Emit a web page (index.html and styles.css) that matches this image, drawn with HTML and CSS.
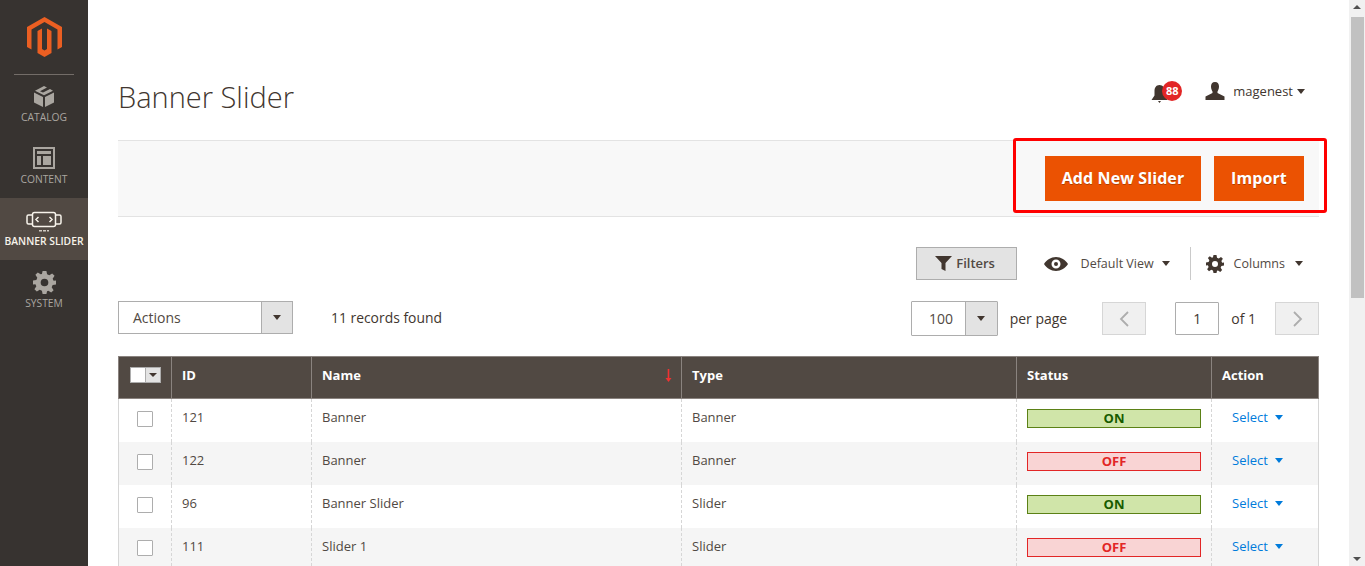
FILE: index.html
```html
<!DOCTYPE html>
<html lang="en">
<head>
<meta charset="utf-8">
<title>Banner Slider</title>
<link rel="stylesheet" href="styles.css">
</head>
<body>
<div class="app">
  <aside class="sidebar">
    <div class="logo">
      <svg width="35" height="40" viewBox="0 0 35 40"><path fill="#eb5f22" d="M17.5 0L35 10V30L30.5 32.6V12.6L17.5 5 4.5 12.6V32.6L0 30V10Z"/><path fill="#eb5f22" d="M10.5 14L15 11.5V32L17.5 33.5 20 32V11.5L24.5 14V36L17.5 40 10.5 36Z"/></svg>
    </div>
    <nav class="nav">
      <a class="nav-item">
        <svg class="nav-icon" width="20" height="21" viewBox="0 0 20 21"><path fill="#aaa6a0" d="M0 6.5L9 11V21L0 16.5ZM20 6.5V16.5L11 21V11ZM10 0L13 1.5 6 5.2 9 6.6 16 3 19 4.7 10 9.3 1 4.7Z"/></svg>
        <span>CATALOG</span>
      </a>
      <a class="nav-item">
        <svg class="nav-icon" width="22" height="22" viewBox="0 0 22 22"><path fill="#aaa6a0" fill-rule="evenodd" d="M0 0H22V22H0ZM2 2V20H20V2ZM4 4H18V7H4ZM4 9H8V18H4ZM10 9H18V18H10Z"/></svg>
        <span>CONTENT</span>
      </a>
      <a class="nav-item active">
        <svg class="nav-icon" width="36" height="22" viewBox="0 0 36 22"><g fill="none" stroke="#f7f3eb" stroke-width="1.5"><rect x="6.5" y="1.5" width="23" height="14" rx="2"/><path d="M6 4H2.5Q1 4 1 5.500V11.500Q1 13 2.500 13H6M30 4H33.500Q35 4 35 5.500V11.500Q35 13 33.500 13H30M12.500 6L10 8.500 12.500 11M23.500 6L26 8.500 23.500 11"/></g><path fill="#cfcac3" d="M13 19H16V20.500H13ZM17 19H20V20.500H17ZM21 19H23V20.500H21Z"/></svg>
        <span>BANNER SLIDER</span>
      </a>
      <a class="nav-item">
        <svg class="nav-icon" width="23" height="23" viewBox="0 0 24 24"><path fill="#aaa6a0" fill-rule="evenodd" d="M10 0H14L14.700 3.500 17 4.500 20 2.500 22.500 5 20.500 8 21.500 10.300 24 10V14L20.500 14.700 19.500 17 21.500 20 19 22.500 16 20.500 14.700 21 14 24H10L9.300 20.500 7 19.500 4 21.500 1.500 19 3.500 16 2.500 13.700 0 14V10L3.500 9.300 4.500 7 2.500 4 5 1.500 8 3.500 9.300 3ZM12 8A4 4 0 1 0 12 16 4 4 0 1 0 12 8Z"/></svg>
        <span>SYSTEM</span>
      </a>
    </nav>
  </aside>

  <main class="main">
    <header class="page-head">
      <h1 class="title">Banner Slider</h1>
      <div class="head-tools">
        <div class="bell">
          <svg width="17" height="18" viewBox="0 0 17 18"><path fill="#41362f" d="M8.500 0C12 0 13.500 3 13.500 6V10.500L16.500 15H.5L3.500 10.500V6C3.500 3 5 0 8.500 0ZM7 16H10L8.500 18Z"/></svg>
          <span class="badge">88</span>
        </div>
        <div class="user">
          <svg width="20" height="18" viewBox="0 0 20 18"><path fill="#41362f" d="M10 0C12.800 0 14 2 14 4.500S13 8.500 12.500 9.500V11L19.500 14.500V18H.5V14.500L7.500 11V9.500C7 8.500 6 7 6 4.500S7.200 0 10 0Z"/></svg>
          <span class="user-name">magenest</span>
          <i class="caret"></i>
        </div>
      </div>
    </header>

    <section class="actions-band">
      <button class="btn-primary btn-add">Add New Slider</button>
      <button class="btn-primary btn-import">Import</button>
      <div class="highlight"></div>
    </section>

    <section class="grid-tools">
      <button class="btn-filters">
        <svg width="17" height="15" viewBox="0 0 17 15"><path fill="#41362f" d="M0 0H17L10.500 7V15L6.500 13V7Z"/></svg>
        <span class="filters-label">Filters</span>
      </button>
      <div class="view-switch">
        <svg width="24" height="14" viewBox="0 0 24 14"><path fill="#41362f" fill-rule="evenodd" d="M12 0C17 0 21.500 3 24 7 21.500 11 17 14 12 14S2.500 11 0 7C2.500 3 7 0 12 0ZM12 2.500A4.500 4.500 0 1 0 12 11.500 4.500 4.500 0 1 0 12 2.500ZM12 5A2 2 0 1 1 12 9 2 2 0 1 1 12 5Z"/></svg>
        <span class="view-label">Default View</span>
        <i class="caret"></i>
      </div>
      <div class="columns-switch">
        <svg width="18" height="18" viewBox="0 0 24 24"><path fill="#41362f" fill-rule="evenodd" d="M10 0H14L14.700 3.500 17 4.500 20 2.500 22.500 5 20.500 8 21.500 10.300 24 10V14L20.500 14.700 19.500 17 21.500 20 19 22.500 16 20.500 14.700 21 14 24H10L9.300 20.500 7 19.500 4 21.500 1.500 19 3.500 16 2.500 13.700 0 14V10L3.500 9.300 4.500 7 2.500 4 5 1.500 8 3.500 9.300 3ZM12 8A4 4 0 1 0 12 16 4 4 0 1 0 12 8Z"/></svg>
        <span class="columns-label">Columns</span>
        <i class="caret"></i>
      </div>
    </section>

    <section class="pager-row">
      <div class="select select-actions">
        <span class="select-value">Actions</span>
        <span class="select-arrow"><i class="caret"></i></span>
      </div>
      <span class="records">11 records found</span>
      <div class="pager">
        <div class="select select-size">
          <span class="select-value">100</span>
          <span class="select-arrow"><i class="caret"></i></span>
        </div>
        <span class="per-page">per page</span>
        <span class="page-btn">
          <svg width="11" height="16" viewBox="0 0 11 16"><path fill="none" stroke="#adadad" stroke-width="1.800" d="M9 1L2 8 9 15"/></svg>
        </span>
        <span class="page-input">1</span>
        <span class="page-of">of 1</span>
        <span class="page-btn">
          <svg width="11" height="16" viewBox="0 0 11 16"><path fill="none" stroke="#adadad" stroke-width="1.800" d="M2 1L9 8 2 15"/></svg>
        </span>
      </div>
    </section>

    <table class="grid">
      <colgroup>
        <col class="c-check"><col class="c-id"><col class="c-name"><col class="c-type"><col class="c-status"><col class="c-action">
      </colgroup>
      <thead>
        <tr>
          <th><span class="mass"><span class="mass-box"></span><span class="mass-arrow"><i class="caret caret-small"></i></span></span></th>
          <th>ID</th>
          <th class="sorted">Name<svg class="sort-arrow" width="7" height="13" viewBox="0 0 7 13"><path fill="#f03232" d="M2.700 0H4.300V9H6.500L3.500 13 .5 9H2.700Z"/></svg></th>
          <th>Type</th>
          <th>Status</th>
          <th>Action</th>
        </tr>
      </thead>
      <tbody>
        <tr>
          <td class="cell-check"><span class="check"></span></td><td>121</td><td>Banner</td><td>Banner</td>
          <td><span class="status on">ON</span></td>
          <td class="cell-action"><a class="select-link">Select<i class="caret caret-blue"></i></a></td>
        </tr>
        <tr>
          <td class="cell-check"><span class="check"></span></td><td>122</td><td>Banner</td><td>Banner</td>
          <td><span class="status off">OFF</span></td>
          <td class="cell-action"><a class="select-link">Select<i class="caret caret-blue"></i></a></td>
        </tr>
        <tr>
          <td class="cell-check"><span class="check"></span></td><td>96</td><td>Banner Slider</td><td>Slider</td>
          <td><span class="status on">ON</span></td>
          <td class="cell-action"><a class="select-link">Select<i class="caret caret-blue"></i></a></td>
        </tr>
        <tr>
          <td class="cell-check"><span class="check"></span></td><td>111</td><td>Slider 1</td><td>Slider</td>
          <td><span class="status off">OFF</span></td>
          <td class="cell-action"><a class="select-link">Select<i class="caret caret-blue"></i></a></td>
        </tr>
      </tbody>
    </table>
  </main>

  <div class="scrollbar">
    <span class="sb-arrow sb-up"></span>
    <span class="sb-thumb"></span>
    <span class="sb-arrow sb-down"></span>
  </div>
</div>
</body>
</html>
```
FILE: styles.css
```css
* { box-sizing: border-box; }
html, body { margin: 0; height: 100%; overflow: hidden; }
body { font-family: "Open Sans", sans-serif; font-size: 14px; color: #41362f; background: #fff; }

.app { display: flex; height: 566px; overflow: hidden; }

/* Sidebar */
.sidebar { width: 88px; flex: none; background: #373330; }
.logo { height: 75px; margin: 0 14px; padding-top: 17px; display: flex; justify-content: center; border-bottom: 1px solid #736d68; }
.nav { display: flex; flex-direction: column; }
.nav-item { height: 62px; display: flex; flex-direction: column; align-items: center; color: #aaa6a0; font-size: 10.300px; line-height: 14px; white-space: nowrap; }
.nav-item:first-child { height: 61px; padding-top: 11px; }
.nav-item span { margin-top: auto; padding-bottom: 12px; }
.nav-item:nth-child(2) { padding-top: 11px; }
.nav-item:nth-child(3) { padding-top: 13px; }
.nav-item:nth-child(4) { padding-top: 11px; }
.nav-item.active { background: #514943; color: #f7f3eb; font-weight: 600; font-size: 10.300px; }

/* Main */
.main { flex: 1; min-width: 0; padding: 0 30px; position: relative; }
.page-head { height: 140px; display: flex; justify-content: space-between; padding-top: 78px; }
.title { margin: 0; font-size: 29px; font-weight: 300; line-height: 38px; color: #41362f; }
.head-tools { display: flex; align-items: flex-start; padding: 3px 14px 0 0; }
.bell { position: relative; width: 32px; height: 20px; margin: 2px 22px 0 0; padding-top: 2px; }
.badge { position: absolute; left: 11px; top: -2px; width: 20px; height: 20px; border-radius: 50%; background: #e22626; color: #fff; font-size: 11px; font-weight: 700; line-height: 20px; text-align: center; }
.user { display: flex; align-items: center; height: 20px; font-size: 13px; }
.user-name { margin: 0 4px 0 8px; }

.caret { display: inline-block; width: 0; height: 0; border-style: solid; border-width: 5px 4.500px 0; border-color: #41362f transparent transparent; }

/* Band */
.actions-band { height: 77px; margin-right: 0; padding: 15px 15px 0 0; display: flex; justify-content: flex-end; gap: 13px; background: #f8f8f8; border-top: 1px solid #e3e3e3; border-bottom: 1px solid #e3e3e3; position: relative; }
.btn-primary { height: 45px; border: 0; background: #eb5202; color: #fff; font: 700 16px/45px "Open Sans", sans-serif; letter-spacing: .1px; padding: 0; text-shadow: 0 1px 0 rgba(0,0,0,.25); }
.btn-add { width: 156px; }
.btn-import { width: 90px; }
.highlight { position: absolute; left: 895px; top: -3px; width: 314px; height: 75px; border: 3px solid #f00; border-radius: 3px; pointer-events: none; }

/* Grid tools */
.grid-tools { display: flex; justify-content: flex-end; align-items: center; height: 33px; margin-top: 30px; padding-right: 16px; }
.btn-filters { width: 101px; height: 33px; display: flex; align-items: center; justify-content: center; gap: 4px; background: #e3e3e3; border: 1px solid #adadad; color: #514943; font: 600 13px "Open Sans", sans-serif; padding: 0 2px 0 0; }
.filters-label { position: relative; top: -1px; }
.view-switch { display: flex; align-items: center; margin-left: 27px; width: 147px; height: 33px; border-right: 1px solid #cacaca; }
.view-label { font-size: 12.500px; margin: 0 8px 0 13px; color: #514943; }
.columns-switch { display: flex; align-items: center; height: 33px; margin-left: 15px; }
.columns-label { font-size: 12.500px; margin: 0 10px 0 10px; color: #514943; }

/* Pager row */
.pager-row { display: flex; align-items: flex-start; margin-top: 21px; height: 55px; }
.select { display: flex; height: 33px; border: 1px solid #adadad; background: #fff; }
.select-actions { width: 175px; }
.select-value { flex: 1; line-height: 31px; padding-left: 14px; color: #514943; }
.select-arrow { width: 32px; flex: none; display: flex; align-items: center; justify-content: center; background: #e3e3e3; border-left: 1px solid #adadad; }
.select-actions .select-arrow { width: 31px; }
.records { margin-left: 38px; line-height: 33px; font-size: 13.900px; }
.pager { margin-left: auto; display: flex; align-items: flex-start; }
.select-size { width: 87px; height: 35px; border-radius: 1px; }
.select-size .select-value { line-height: 33px; text-align: center; padding-left: 6px; }
.per-page { margin: 0 35px 0 12px; line-height: 35px; }
.page-btn { width: 44px; height: 33px; margin-top: 1px; display: flex; align-items: center; justify-content: center; background: #f0f0f0; border: 1px solid #d6d6d6; }
.page-input { width: 44px; height: 33px; margin: 1px 0 0 29px; text-align: center; line-height: 31px; border: 1px solid #adadad; border-radius: 1px; }
.page-of { margin: 0 19px 0 12px; line-height: 35px; }

/* Table */
.grid { width: 1200px; border-collapse: collapse; table-layout: fixed; font-size: 13px; }
.c-check { width: 53px; } .c-id { width: 140px; } .c-name { width: 370px; } .c-type { width: 335px; } .c-status { width: 195px; } .c-action { width: 107px; }
.grid th { height: 42px; padding: 0 10px 5px; text-align: left; font-weight: 700; color: #fff; background: #514943; border: 1px solid #8a837f; }
.grid th.sorted { position: relative; }
.sort-arrow { position: absolute; right: 9px; top: 12px; }
.grid td { height: 43px; padding: 0 10px 7px; vertical-align: middle; border-left: 1px dashed #d6d6d6; border-right: 1px dashed #d6d6d6; color: #514943; }
.grid td:first-child { border-left-style: solid; }
.grid td:last-child { border-right-style: solid; }
.grid tbody tr:nth-child(even) td { background: #f5f5f5; }
.grid td.cell-check { padding: 0 0 3px 18px; }
.grid td.cell-action { padding-left: 20px; }
.check { display: block; width: 16px; height: 16px; border: 1px solid #adadad; border-radius: 1px; background: #fff; }
.mass { display: flex; margin-left: 1px; width: 31px; height: 16px; border: 1px solid #adadad; background: #fff; }
.mass-box { flex: 1; }
.mass-arrow { width: 15px; display: flex; align-items: center; justify-content: center; background: #e3e3e3; border-left: 1px solid #adadad; }
.caret-small { border-width: 4px 4px 0; }
.status { display: block; height: 19px; line-height: 17px; margin-top: 3px; text-align: center; font-weight: 700; font-size: 13px; }
.status.on { background: #d0e5a9; border: 1px solid #5b8116; color: #185b00; }
.status.off { background: #f9d4d4; border: 1px solid #e22626; color: #e22626; }
.select-link { color: #007bdb; }
.caret-blue { border-top-color: #007bdb; margin-left: 7px; vertical-align: 2px; }

/* Scrollbar */
.scrollbar { width: 16px; flex: none; background: #f1f1f1; display: flex; flex-direction: column; align-items: center; position: relative; }
.sb-thumb { position: absolute; top: 17px; left: 2px; width: 13px; height: 281px; background: #c1c1c1; }
.sb-arrow { position: absolute; width: 0; height: 0; border-style: solid; left: 4px; }
.sb-up { top: 5px; border-width: 0 4px 4px; border-color: transparent transparent #505050; }
.sb-down { bottom: 5px; border-width: 4px 4px 0; border-color: #505050 transparent transparent; }
```
